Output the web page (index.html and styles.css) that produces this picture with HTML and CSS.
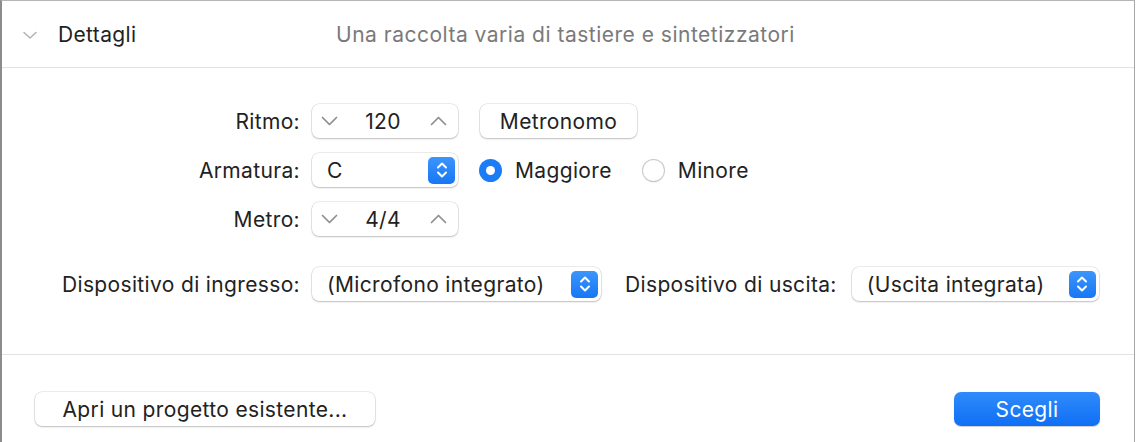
FILE: index.html
```html
<!DOCTYPE html>
<html lang="it">
<head>
<meta charset="utf-8">
<link rel="stylesheet" href="styles.css">
</head>
<body>
<div class="frame">
  <div class="header">
    <svg class="disclosure" width="16" height="10" viewBox="0 0 16 10"><path d="M2 2.5 L8 8 L14 2.5" fill="none" stroke="#b4b4b4" stroke-width="1.6" stroke-linecap="round" stroke-linejoin="round"/></svg>
    <span class="title">Dettagli</span>
    <span class="subtitle">Una raccolta varia di tastiere e sintetizzatori</span>
  </div>
  <div class="form">
    <div class="row">
      <span class="label">Ritmo:</span>
      <div class="ctl stepper">
        <svg class="chev" width="17" height="10" viewBox="0 0 17 10"><path d="M1.5 1.5 L8.5 8.5 L15.5 1.5" fill="none" stroke="#8e8e8e" stroke-width="1.7" stroke-linecap="round" stroke-linejoin="round"/></svg>
        <span class="val">120</span>
        <svg class="chev" width="17" height="10" viewBox="0 0 17 10"><path d="M1.5 8.5 L8.5 1.5 L15.5 8.5" fill="none" stroke="#8e8e8e" stroke-width="1.7" stroke-linecap="round" stroke-linejoin="round"/></svg>
      </div>
      <button class="btn metro-btn">Metronomo</button>
    </div>
    <div class="row">
      <span class="label">Armatura:</span>
      <div class="ctl popup key">
        <span class="ptext">C</span>
        <span class="arrows"><svg width="14" height="20" viewBox="0 0 14 20"><path d="M3 7.5 L7 3.5 L11 7.5 M3 12.5 L7 16.5 L11 12.5" fill="none" stroke="#fff" stroke-width="2" stroke-linecap="round" stroke-linejoin="round"/></svg></span>
      </div>
      <label class="radio"><span class="dot on"></span>Maggiore</label>
      <label class="radio"><span class="dot"></span>Minore</label>
    </div>
    <div class="row">
      <span class="label">Metro:</span>
      <div class="ctl stepper">
        <svg class="chev" width="17" height="10" viewBox="0 0 17 10"><path d="M1.5 1.5 L8.5 8.5 L15.5 1.5" fill="none" stroke="#8e8e8e" stroke-width="1.7" stroke-linecap="round" stroke-linejoin="round"/></svg>
        <span class="val">4/4</span>
        <svg class="chev" width="17" height="10" viewBox="0 0 17 10"><path d="M1.5 8.5 L8.5 1.5 L15.5 8.5" fill="none" stroke="#8e8e8e" stroke-width="1.7" stroke-linecap="round" stroke-linejoin="round"/></svg>
      </div>
    </div>
    <div class="row devices">
      <span class="label">Dispositivo di ingresso:</span>
      <div class="ctl popup dev-in">
        <span class="ptext">(Microfono integrato)</span>
        <span class="arrows"><svg width="14" height="20" viewBox="0 0 14 20"><path d="M3 7.5 L7 3.5 L11 7.5 M3 12.5 L7 16.5 L11 12.5" fill="none" stroke="#fff" stroke-width="2" stroke-linecap="round" stroke-linejoin="round"/></svg></span>
      </div>
      <span class="label2">Dispositivo di uscita:</span>
      <div class="ctl popup dev-out">
        <span class="ptext">(Uscita integrata)</span>
        <span class="arrows"><svg width="14" height="20" viewBox="0 0 14 20"><path d="M3 7.5 L7 3.5 L11 7.5 M3 12.5 L7 16.5 L11 12.5" fill="none" stroke="#fff" stroke-width="2" stroke-linecap="round" stroke-linejoin="round"/></svg></span>
      </div>
    </div>
  </div>
  <div class="footer">
    <button class="btn open-btn">Apri un progetto esistente...</button>
    <button class="btn primary">Scegli</button>
  </div>
</div>
</body>
</html>
```
FILE: styles.css
```css
* { box-sizing: border-box; }
html, body { margin: 0; padding: 0; background: #fff; }
body {
  width: 1136px;
  height: 442px;
  overflow: hidden;
  font-family: Inter, "Noto Sans", "Liberation Sans", sans-serif;
  font-size: 21px;
  letter-spacing: 0.35px;
  color: #222;
}
.frame {
  width: 1135px;
  height: 442px;
  border-top: 1px solid #b5b5b5;
  border-left: 2px solid #8c8c8c;
  border-right: 1px solid #a6a6a6;
  display: flex;
  flex-direction: column;
}
.header {
  height: 67px;
  flex: none;
  display: flex;
  align-items: center;
  border-bottom: 1px solid #e2e2e2;
  padding-top: 1px;
}
.disclosure { margin-left: 20px; flex: none; }
.title { margin-left: 20px; width: 278px; }
.subtitle { color: #7a7a7a; letter-spacing: 0.5px; }
.form {
  height: 287px;
  flex: none;
  border-bottom: 1px solid #e2e2e2;
  padding-top: 36px;
  display: flex;
  flex-direction: column;
  gap: 15px;
}
.row {
  display: flex;
  align-items: center;
  height: 34px;
}
.row.devices { margin-top: 16px; }
.label {
  width: 298px;
  text-align: right;
  flex: none;
}
.row .ctl { margin-left: 12px; }
.ctl {
  background: #fff;
  border-radius: 7px;
  box-shadow: 0 0 0 0.5px rgba(0,0,0,0.14), 0 1px 2px rgba(0,0,0,0.2);
  height: 34px;
  display: flex;
  align-items: center;
  flex: none;
}
.stepper {
  width: 146px;
  padding: 0 11px 0 9px;
  justify-content: space-between;
}
.stepper .val { flex: 1; text-align: center; padding-right: 2px; }
.popup { padding: 0 3px 0 15px; justify-content: space-between; }
.key { width: 146px; }
.dev-in { width: 289px; }
.dev-out { width: 247px; }
.arrows {
  width: 27px;
  height: 27px;
  border-radius: 5px;
  background: linear-gradient(#3d95fb, #1677f5);
  display: flex;
  align-items: center;
  justify-content: center;
}
.btn {
  font: inherit;
  letter-spacing: inherit;
  color: #222;
  background: #fff;
  border: none;
  border-radius: 7px;
  box-shadow: 0 0 0 0.5px rgba(0,0,0,0.14), 0 1px 2px rgba(0,0,0,0.2);
  height: 34px;
  padding: 0;
}
.metro-btn { width: 157px; margin-left: 22px; }
.radio { display: flex; align-items: center; }
.radio:first-of-type { margin-left: 21px; }
.radio + .radio { margin-left: 30px; }
.dot {
  width: 23px;
  height: 23px;
  border-radius: 50%;
  margin-right: 13px;
  background: #fff;
  box-shadow: inset 0 0 0 1px #c9c9c9, 0 0.5px 1px rgba(0,0,0,0.08);
}
.dot.on {
  background: #1a7cf7;
  box-shadow: none;
  position: relative;
}
.dot.on::after {
  content: "";
  position: absolute;
  left: 7px;
  top: 7px;
  width: 9px;
  height: 9px;
  border-radius: 50%;
  background: #fff;
}
.label2 { margin-left: 24px; flex: none; }
.row .dev-out { margin-left: 15px; }
.footer {
  flex: 1;
  display: flex;
  justify-content: space-between;
  align-items: flex-start;
  padding: 37px 34px 0 33px;
}
.open-btn { width: 340px; }
.primary {
  width: 146px;
  color: #fff;
  background: linear-gradient(#2f8bfb, #0f6ff5);
  box-shadow: 0 0.5px 1px rgba(0,0,0,0.2);
}
```
